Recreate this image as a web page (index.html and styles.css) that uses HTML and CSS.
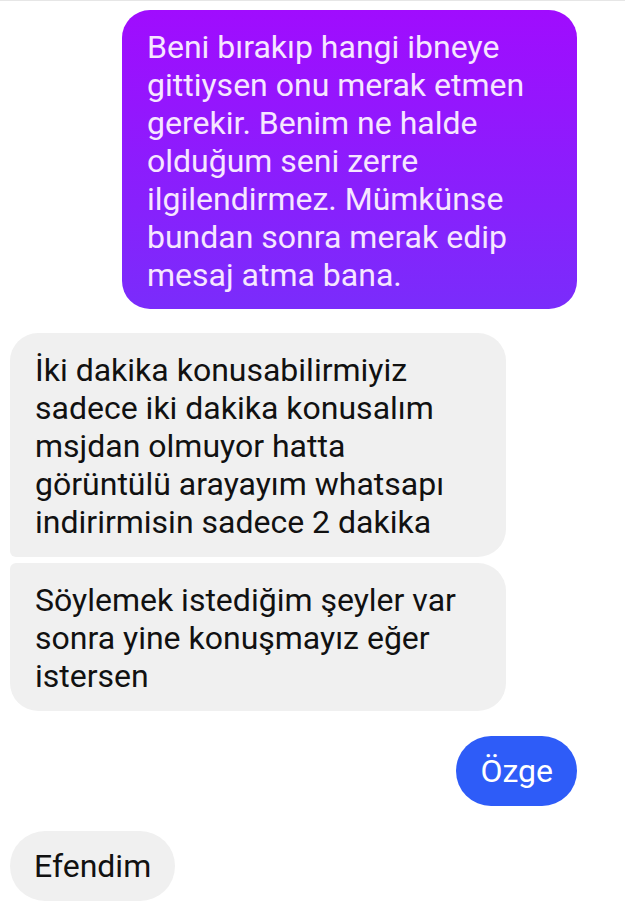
FILE: index.html
```html
<!DOCTYPE html>
<html>
<head>
	<meta charset="utf-8">
	<meta name="viewport" content="width=device-width, initial-scale=1">
	<title>Sohbet</title>
	<link rel="stylesheet" href="styles.css">
</head>
<body>
	<main class="chat">
		<div class="row out lead">
			<div class="bubble sent long">Beni bırakıp hangi ibneye gittiysen onu merak etmen gerekir. Benim ne halde olduğum seni zerre ilgilendirmez. Mümkünse bundan sonra merak edip mesaj atma bana.</div>
		</div>
		<div class="row in first">
			<div class="bubble recv wide top">İki dakika konusabilirmiyiz sadece iki dakika konusalım msjdan olmuyor hatta görüntülü arayayım whatsapı indirirmisin sadece 2 dakika</div>
		</div>
		<div class="row in">
			<div class="bubble recv wide bottom">Söylemek istediğim şeyler var sonra yine konuşmayız eğer istersen</div>
		</div>
		<div class="row out">
			<div class="bubble blue pill">Özge</div>
		</div>
		<div class="row in">
			<div class="bubble recv pill">Efendim</div>
		</div>
	</main>
</body>
</html>
```
FILE: styles.css
```css
body{margin: 0;background: #fff;font-family: Roboto, "Noto Sans", sans-serif;}
.chat{border-top: 1px solid #e6e6e6;padding: 9px 48px 0 10px;display: flex;flex-direction: column;}
.row{display: flex;margin-bottom: 25px;}
.row.out{justify-content: flex-end;}
.row.in{justify-content: flex-start;}
.row.lead{margin-bottom: 24px;}
.row.first{margin-bottom: 6px;}
.bubble{font-size: 32px;line-height: 38px;padding: 18px 25px 16px 25px;border-radius: 28px;box-sizing: border-box;}
.sent{background: linear-gradient(#a00cfe, #7a2cfb);color: #f6e6ff;}
.long{width: 455px;padding-right: 30px;padding-bottom: 15px;}
.recv{background: #f0f0f0;color: #111;}
.wide{width: 496px;}
.top{border-bottom-left-radius: 6px;}
.bottom{border-top-left-radius: 6px;}
.blue{background: #2e5cf8;color: #fff;}
.pill{border-radius: 36px;padding: 16px 24px;}
```
